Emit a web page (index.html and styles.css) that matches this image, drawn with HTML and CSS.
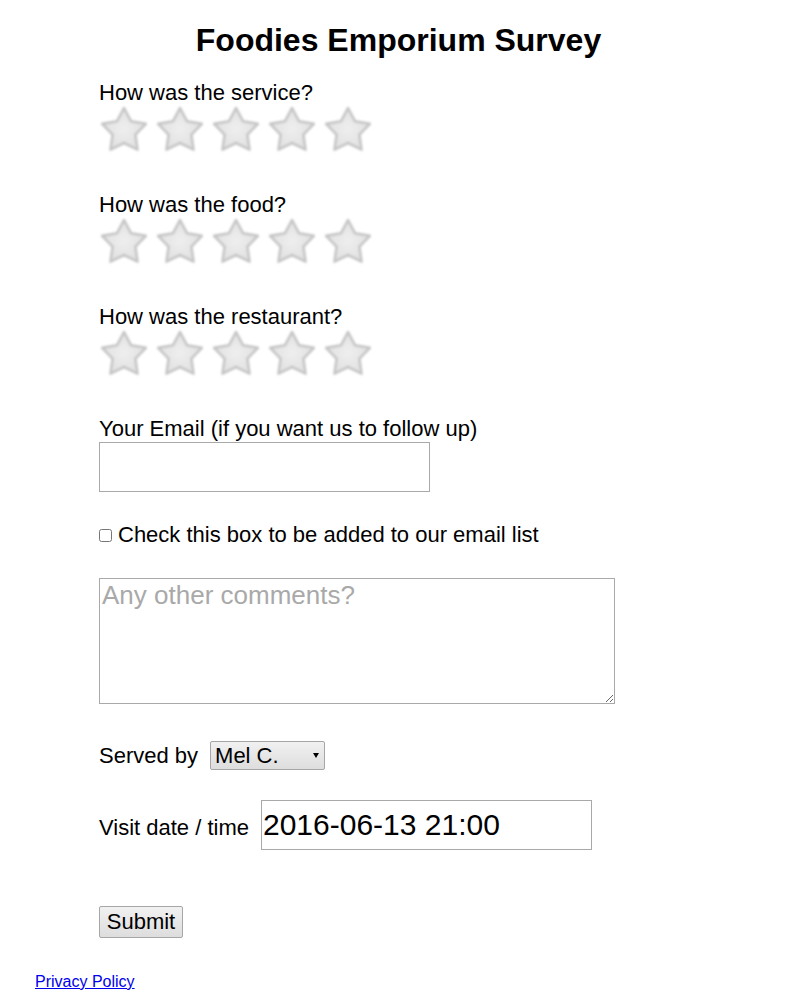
FILE: index.html
```html
<!DOCTYPE html>
<html>
<head>
<meta charset="utf-8">
<title>Foodies Emporium Survey</title>
<link rel="stylesheet" href="styles.css">
</head>
<body>
<svg class="defs" width="0" height="0" aria-hidden="true">
  <defs>
    <filter id="soft" x="-10%" y="-10%" width="120%" height="120%">
      <feGaussianBlur stdDeviation="0.9"/>
    </filter>
    <radialGradient id="sfill" cx="50%" cy="50%" r="55%">
      <stop offset="0" stop-color="#eeeeee"/>
      <stop offset="1" stop-color="#e0e0e0"/>
    </radialGradient>
    <g id="star">
      <path filter="url(#soft)" d="M25 3 L32.05 16.3 L46.88 18.89 L36.4 29.7 L38.52 44.61 L25 38 L11.48 44.61 L13.6 29.7 L3.12 18.89 L17.95 16.3 Z" fill="url(#sfill)" stroke="#c6c6c6" stroke-width="2.6" stroke-linejoin="round"/>
    </g>
  </defs>
</svg>

<h1 class="title">Foodies Emporium Survey</h1>

<form class="survey">
  <div class="question">
    <div class="label">How was the service?</div>
    <div class="stars">
      <svg viewBox="0 0 56 48"><use href="#star"/></svg>
      <svg viewBox="0 0 56 48"><use href="#star"/></svg>
      <svg viewBox="0 0 56 48"><use href="#star"/></svg>
      <svg viewBox="0 0 56 48"><use href="#star"/></svg>
      <svg viewBox="0 0 56 48"><use href="#star"/></svg>
    </div>
  </div>
  <div class="question">
    <div class="label">How was the food?</div>
    <div class="stars">
      <svg viewBox="0 0 56 48"><use href="#star"/></svg>
      <svg viewBox="0 0 56 48"><use href="#star"/></svg>
      <svg viewBox="0 0 56 48"><use href="#star"/></svg>
      <svg viewBox="0 0 56 48"><use href="#star"/></svg>
      <svg viewBox="0 0 56 48"><use href="#star"/></svg>
    </div>
  </div>
  <div class="question">
    <div class="label">How was the restaurant?</div>
    <div class="stars">
      <svg viewBox="0 0 56 48"><use href="#star"/></svg>
      <svg viewBox="0 0 56 48"><use href="#star"/></svg>
      <svg viewBox="0 0 56 48"><use href="#star"/></svg>
      <svg viewBox="0 0 56 48"><use href="#star"/></svg>
      <svg viewBox="0 0 56 48"><use href="#star"/></svg>
    </div>
  </div>

  <div class="email">
    <label class="label" for="email">Your Email (if you want us to follow up)</label>
    <input class="text-input" id="email" type="text">
  </div>

  <label class="check-row">
    <input type="checkbox" class="check">
    <span>Check this box to be added to our email list</span>
  </label>

  <textarea class="comments" placeholder="Any other comments?"></textarea>

  <div class="served">
    <span>Served by</span>
    <span class="select-wrap">
      <select class="server">
        <option>Mel C.</option>
      </select>
    </span>
  </div>

  <div class="visit">
    <span>Visit date / time</span>
    <input class="date-input" type="text" value="2016-06-13 21:00">
  </div>

  <button type="button" class="submit">Submit</button>
</form>

<footer class="footer">
  <a href="#">Privacy Policy</a>
</footer>
</body>
</html>
```

FILE: styles.css
```css
html, body {
  margin: 0;
  padding: 0;
  background: #fff;
}

body {
  font-family: "Liberation Sans", Arial, sans-serif;
  color: #000;
  font-size: 22px;
  line-height: 25px;
}

.defs {
  position: absolute;
  width: 0;
  height: 0;
  overflow: hidden;
}

.title {
  margin: 22px 0 0;
  font-size: 32px;
  line-height: 37px;
  font-weight: bold;
  text-align: center;
}

.survey {
  display: flex;
  flex-direction: column;
  align-items: flex-start;
  padding-left: 99px;
  margin-top: 21px;
}

.label {
  display: block;
}

.question {
  margin-bottom: 39px;
}

.stars {
  display: flex;
  height: 48px;
}

.stars svg {
  width: 56px;
  height: 48px;
  display: block;
}

.email {
  display: flex;
  flex-direction: column;
  align-items: flex-start;
  gap: 1px;
}

.text-input {
  box-sizing: border-box;
  width: 331px;
  height: 50px;
  border: 1px solid #a9a9a9;
  margin: 0;
  padding: 1px;
  font: 22px "Liberation Sans", Arial, sans-serif;
}

.check-row {
  display: flex;
  align-items: center;
  margin-top: 30px;
}

.check {
  width: 13px;
  height: 13px;
  margin: 1px 6px 0 0;
}

.comments {
  box-sizing: border-box;
  width: 516px;
  height: 126px;
  margin-top: 31px;
  border: 1px solid #a9a9a9;
  padding: 1px 2px;
  font: 26px/30px "Liberation Sans", Arial, sans-serif;
  resize: both;
}

.comments::placeholder {
  color: #a9a9a9;
}

.served {
  display: flex;
  align-items: center;
  gap: 12px;
  margin-top: 37px;
}

.select-wrap {
  position: relative;
  display: block;
}

.select-wrap::after {
  content: "";
  position: absolute;
  right: 6px;
  top: 12px;
  border-left: 3.5px solid transparent;
  border-right: 3.5px solid transparent;
  border-top: 5px solid #000;
  pointer-events: none;
}

.server {
  display: block;
  box-sizing: border-box;
  width: 115px;
  height: 29px;
  font: 22px "Liberation Sans", Arial, sans-serif;
  border: 1px solid #a6a6a6;
  border-radius: 2px;
  padding: 0 0 0 4px;
  background: linear-gradient(#f1f1f1, #dddddd);
  color: #000;
  appearance: none;
  -webkit-appearance: none;
}

.visit {
  display: flex;
  align-items: baseline;
  gap: 12px;
  margin-top: 30px;
}

.date-input {
  box-sizing: border-box;
  width: 331px;
  height: 50px;
  border: 1px solid #a9a9a9;
  margin: 0;
  padding: 1px;
  font: 30px "Liberation Sans", Arial, sans-serif;
  color: #000;
}

.submit {
  box-sizing: border-box;
  margin-top: 56px;
  width: 84px;
  height: 32px;
  padding: 0;
  font: 22px "Liberation Sans", Arial, sans-serif;
  color: #000;
  border: 1px solid #a6a6a6;
  border-radius: 2px;
  background: linear-gradient(#f1f1f1, #dddddd);
}

.footer {
  margin-top: 35px;
  padding-left: 35px;
  font-size: 16px;
  line-height: 18px;
}

.footer a {
  color: #0000ee;
}
```
